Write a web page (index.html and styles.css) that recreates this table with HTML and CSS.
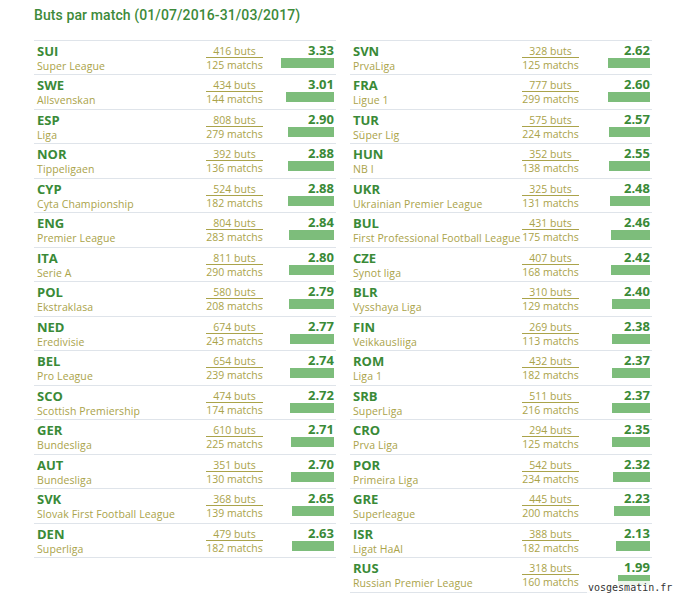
FILE: index.html
```html
<!DOCTYPE html>
<html lang="fr">
<head>
<meta charset="utf-8">
<title>Buts par match</title>
<link rel="stylesheet" href="styles.css">
</head>
<body>
<div class="page">
  <h1 class="title">Buts par match (01/07/2016-31/03/2017)</h1>
  <div class="cols">
    <div class="col" id="left"></div>
    <div class="col" id="right"></div>
  </div>
  <div class="watermark">vosgesmatin.fr</div>
</div>
<script src="app.js"></script>
</body>
</html>
```
FILE: app.js
```js
var left = [
  ["SUI","Super League",416,125,"3.33"],
  ["SWE","Allsvenskan",434,144,"3.01"],
  ["ESP","Liga",808,279,"2.90"],
  ["NOR","Tippeligaen",392,136,"2.88"],
  ["CYP","Cyta Championship",524,182,"2.88"],
  ["ENG","Premier League",804,283,"2.84"],
  ["ITA","Serie A",811,290,"2.80"],
  ["POL","Ekstraklasa",580,208,"2.79"],
  ["NED","Eredivisie",674,243,"2.77"],
  ["BEL","Pro League",654,239,"2.74"],
  ["SCO","Scottish Premiership",474,174,"2.72"],
  ["GER","Bundesliga",610,225,"2.71"],
  ["AUT","Bundesliga",351,130,"2.70"],
  ["SVK","Slovak First Football League",368,139,"2.65"],
  ["DEN","Superliga",479,182,"2.63"]
];
var right = [
  ["SVN","PrvaLiga",328,125,"2.62"],
  ["FRA","Ligue 1",777,299,"2.60"],
  ["TUR","Süper Lig",575,224,"2.57"],
  ["HUN","NB I",352,138,"2.55"],
  ["UKR","Ukrainian Premier League",325,131,"2.48"],
  ["BUL","First Professional Football League",431,175,"2.46"],
  ["CZE","Synot liga",407,168,"2.42"],
  ["BLR","Vysshaya Liga",310,129,"2.40"],
  ["FIN","Veikkausliiga",269,113,"2.38"],
  ["ROM","Liga 1",432,182,"2.37"],
  ["SRB","SuperLiga",511,216,"2.37"],
  ["CRO","Prva Liga",294,125,"2.35"],
  ["POR","Primeira Liga",542,234,"2.32"],
  ["GRE","Superleague",445,200,"2.23"],
  ["ISR","Ligat HaAl",388,182,"2.13"],
  ["RUS","Russian Premier League",318,160,"1.99"]
];
function fill(id, data) {
  var el = document.getElementById(id);
  data.forEach(function (d) {
    var row = document.createElement("div");
    row.className = "row";
    row.innerHTML =
      '<div class="name"><div class="code">' + d[0] + '</div><div class="league">' + d[1] + '</div></div>' +
      '<div class="frac"><div class="buts">' + d[2] + ' buts</div><div class="matchs">' + d[3] + ' matchs</div></div>' +
      '<div class="val"><div class="num">' + d[4] + '</div><div class="bar" style="width:' + Math.round(parseFloat(d[4]) * 16) + 'px"></div></div>';
    el.appendChild(row);
  });
}
fill("left", left);
fill("right", right);
```
FILE: styles.css
```css
html, body {
  margin: 0;
  padding: 0;
  background: #ffffff;
}
.page {
  position: relative;
  width: 681px;
  height: 600px;
  font-family: "Open Sans", "Liberation Sans", sans-serif;
  padding: 0 0 0 34px;
  box-sizing: border-box;
}
.title {
  margin: 0;
  padding-top: 6px;
  height: 40px;
  box-sizing: border-box;
  font-family: Roboto, "Open Sans", sans-serif;
  font-size: 14px;
  font-weight: 500;
  letter-spacing: 0.1px;
  color: #3d8a3a;
  line-height: 18px;
}
.cols {
  display: flex;
  gap: 14px;
}
.col {
  width: 302px;
  border-top: 1px solid #dfe4ea;
}
.row {
  display: grid;
  grid-template-columns: 1fr 57px 71px;
  height: 34.47px;
  box-sizing: border-box;
  border-bottom: 1px solid #dfe4ea;
  padding: 2px 2px 0 3px;
}
.code {
  font-size: 13px;
  font-weight: 700;
  color: #3a8a37;
  line-height: 16px;
}
.league {
  font-size: 10.5px;
  color: #aaa34a;
  line-height: 14px;
  white-space: nowrap;
  letter-spacing: 0.1px;
}
.frac {
  text-align: center;
  font-size: 10.5px;
  color: #aaa34a;
  padding-top: 2px;
}
.buts {
  line-height: 12px;
  border-bottom: 1px solid #aaa34a;
}
.matchs {
  line-height: 14px;
  white-space: nowrap;
}
.val {
  display: flex;
  flex-direction: column;
  align-items: flex-end;
}
.num {
  font-size: 13px;
  font-weight: 700;
  color: #3a8a37;
  line-height: 15px;
}
.bar {
  height: 10px;
  background: #7dbd7b;
}
.watermark {
  position: absolute;
  left: 587px;
  top: 581px;
  font-family: "DejaVu Sans Mono", monospace;
  font-size: 10px;
  color: #333333;
  background: rgba(255, 255, 255, 0.85);
  line-height: 13px;
  padding: 0 1px;
}
```
